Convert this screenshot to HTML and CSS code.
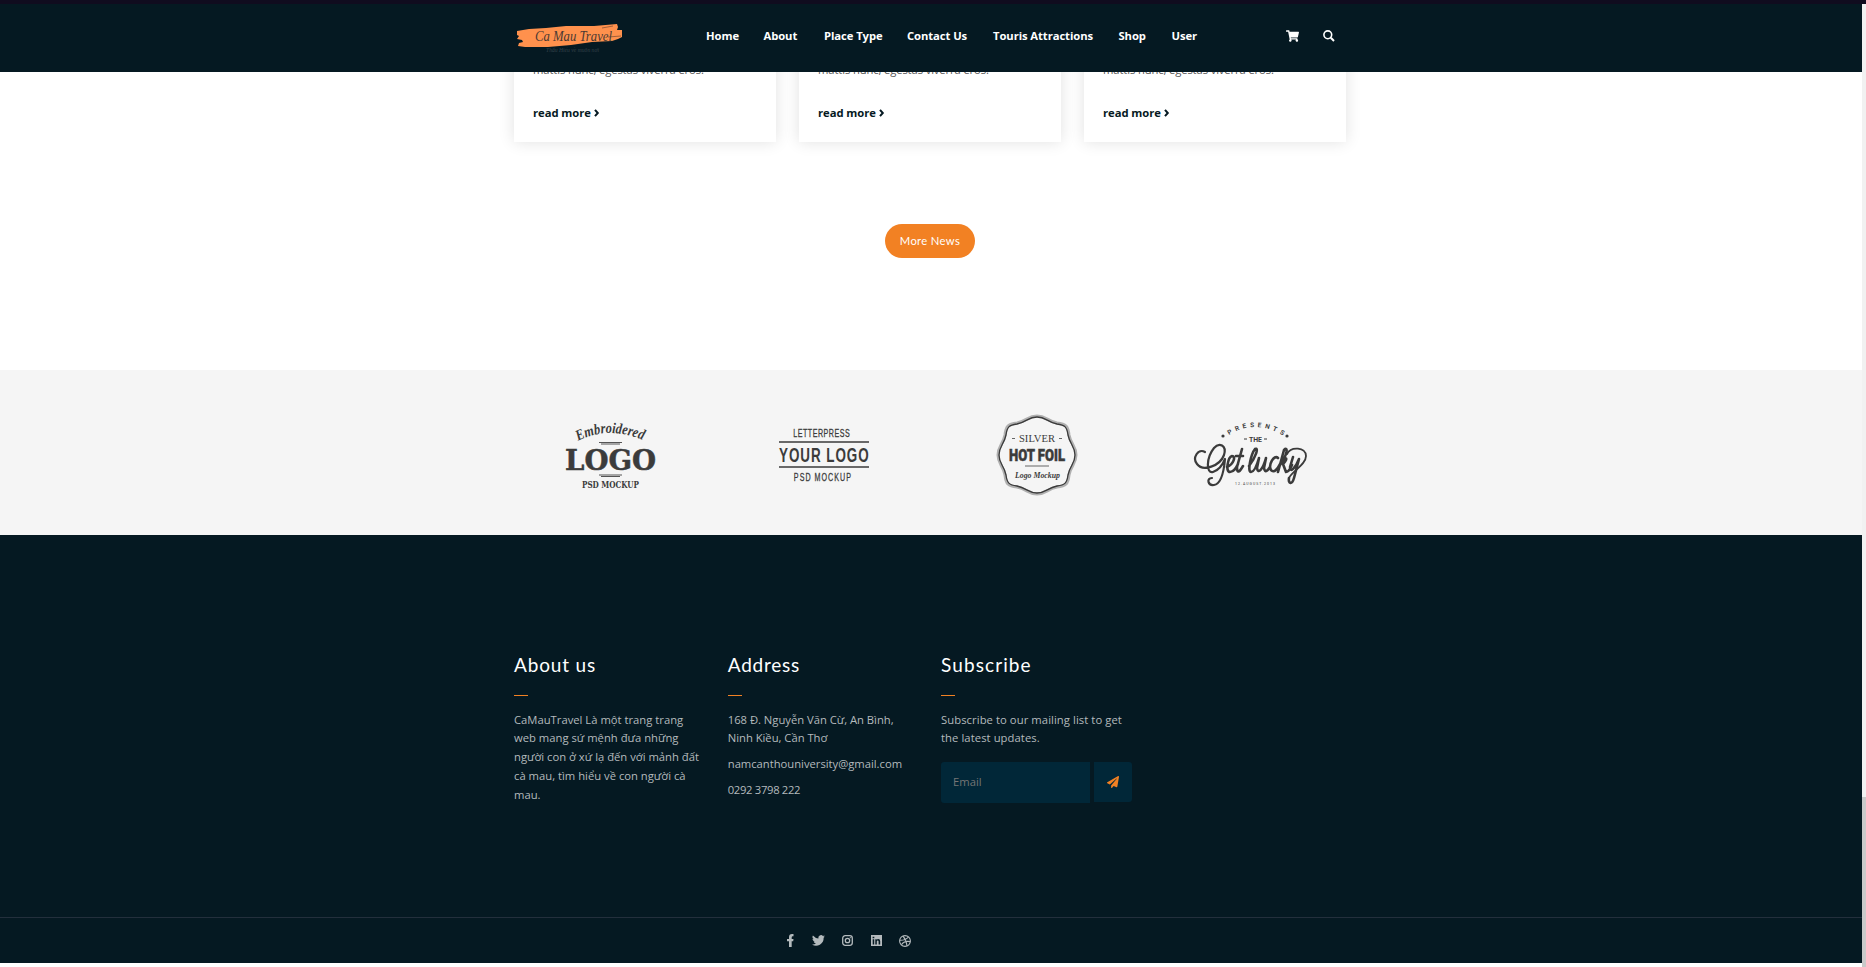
FILE: index.html
```html
<!DOCTYPE html>
<html lang="vi">
<head>
<meta charset="utf-8">
<title>Ca Mau Travel</title>
<link rel="stylesheet" href="styles.css">
</head>
<body>
<header class="header">
  <div class="header-inner">
    <svg class="brand" width="108" height="34" viewBox="0 0 108 34">
      <path d="M1 7L13 5 30 4 50 2 78 2 101 0 102 3 101 6 106 6 106 13 102 15 96 17 76 18 55 21 32 23 9 23 2 22 3 19 7 18 6 16 1 15 3 12 1 11Z" fill="#ff914d"/>
      <path d="M86 4L97 2M92 13L105 12" stroke="#7a4a30" stroke-width=".7" fill="none"/>
      <text class="script brand-name" x="19" y="17" textLength="77" lengthAdjust="spacingAndGlyphs">Ca Mau Travel</text>
      <text class="script brand-sub" x="30" y="28" textLength="53" lengthAdjust="spacingAndGlyphs">Thấu Hiểu về muôn nơi</text>
    </svg>
    <nav class="nav">
      <a class="n1">Home</a><a class="n2">About</a><a class="n3">Place Type</a><a class="n4">Contact Us</a><a class="n5">Touris Attractions</a><a class="n6">Shop</a><a class="n7">User</a>
    </nav>
    <div class="tools">
      <svg width="13" height="12" viewBox="0 0 576 512"><path fill="#fff" d="M528 301l47-208c4-15-8-29-23-29H159l-9-45C148 8 138 0 127 0H24C11 0 0 11 0 24v16c0 13 11 24 24 24h70l70 343a56 56 0 1 0 67 9h210a56 56 0 1 0 64-11l5-25c4-15-8-29-23-29H218l-7-32h294c11 0 20-8 23-18z"/></svg>
      <svg width="12" height="12" viewBox="0 0 12 12"><circle cx="4.8" cy="4.8" r="3.9" fill="none" stroke="#fff" stroke-width="1.6"/><path d="M7.8 7.8L11 11" stroke="#fff" stroke-width="2"/></svg>
    </div>
  </div>
</header>
<div class="scrollbar"><div class="thumb"></div></div>
<main class="page">
  <section class="news">
    <div class="cards">
      <article class="card"><p class="excerpt">mattis nunc, egestas viverra eros.</p><a class="more">read more <svg width="5" height="8" viewBox="0 0 5 8"><path d="M1 .8L3.8 4 1 7.2" fill="none" stroke="#051922" stroke-width="2"/></svg></a></article>
      <article class="card"><p class="excerpt">mattis nunc, egestas viverra eros.</p><a class="more">read more <svg width="5" height="8" viewBox="0 0 5 8"><path d="M1 .8L3.8 4 1 7.2" fill="none" stroke="#051922" stroke-width="2"/></svg></a></article>
      <article class="card"><p class="excerpt">mattis nunc, egestas viverra eros.</p><a class="more">read more <svg width="5" height="8" viewBox="0 0 5 8"><path d="M1 .8L3.8 4 1 7.2" fill="none" stroke="#051922" stroke-width="2"/></svg></a></article>
    </div>
    <a class="btn">More News</a>
  </section>
  <section class="logos">
    <svg width="92" height="66" viewBox="0 0 92 66" fill="#3b3b3b">
      <path id="arc1" d="M13 19Q44 3 80 19" fill="none"/>
      <text class="script emb"><textPath href="#arc1" textLength="67" lengthAdjust="spacingAndGlyphs">Embroidered</textPath></text>
      <path d="M34 20.500h23M36 22h19M34 53h23M36 54.500h19" stroke="#555" stroke-width="1"/>
      <text class="slab" x="0" y="48" textLength="91" lengthAdjust="spacingAndGlyphs">LOGO</text>
      <text class="slab-sm" x="17" y="66" textLength="57" lengthAdjust="spacingAndGlyphs">PSD MOCKUP</text>
    </svg>
    <svg width="90" height="56" viewBox="0 0 90 56" fill="#3b3b3b">
      <g transform="scale(.62 1)"><text class="cond" x="23" y="10" textLength="91">LETTERPRESS</text></g>
      <path d="M0 15h90M0 40h90" stroke="#3b3b3b" stroke-width="1.7"/>
      <g transform="scale(.64 1)"><text class="cond-b" x="0" y="35" textLength="140">YOUR LOGO</text></g>
      <g transform="scale(.62 1)"><text class="cond" x="24" y="54" textLength="92">PSD MOCKUP</text></g>
    </svg>
    <svg width="82" height="82" viewBox="-41 -41 82 82" fill="#3b3b3b">
      <path d="M0-39C9-39 10-34 20-32C29-31 31-29 32-20C34-10 39-9 39 0C39 9 34 10 32 20C31 29 29 31 20 32C10 34 9 39 0 39C-9 39-10 34-20 32C-29 31-31 29-32 20C-34 10-39 9-39 0C-39-9-34-10-32-20C-31-29-29-31-20-32C-10-34-9-39 0-39Z" fill="none" stroke="#b0b0b0" stroke-width="3"/>
      <path d="M0-38C9-38 10-33 20-31C28-30 30-28 31-20C33-10 38-9 38 0C38 9 33 10 31 20C30 28 28 30 20 31C10 33 9 38 0 38C-9 38-10 33-20 31C-28 30-30 28-31 20C-33 10-38 9-38 0C-38-9-33-10-31-20C-30-28-28-30-20-31C-10-33-9-38 0-38Z" fill="none" stroke="#3b3b3b" stroke-width="1.300"/>
      <text class="silver" x="-18" y="-13.500" textLength="36" lengthAdjust="spacingAndGlyphs">SILVER</text>
      <path d="M-25-16.500h3M22-16.500h3M-12 11h24" stroke="#666" stroke-width="1.200"/>
      <text class="hot" x="-28" y="6" textLength="56" lengthAdjust="spacingAndGlyphs">HOT FOIL</text>
      <text class="script mock" x="-22" y="23" textLength="45" lengthAdjust="spacingAndGlyphs">Logo Mockup</text>
    </svg>
    <svg class="lucky" width="114" height="68" viewBox="0 0 114 68" fill="#3b3b3b">
      <path id="arc2" d="M35 14Q60-2 88 14" fill="none"/>
      <text class="presents"><textPath href="#arc2" textLength="57">PRESENTS</textPath></text>
      <circle cx="29" cy="15" r="1.600"/><circle cx="93" cy="15" r="1.600"/>
      <text class="the" x="55" y="21" textLength="13" lengthAdjust="spacingAndGlyphs">THE</text>
      <path d="M50 18h3M70 18h3" stroke="#3b3b3b"/>
      <g fill="none" stroke="#3b3b3b" stroke-linecap="round" stroke-linejoin="round">
        <path stroke-width="2.200" d="M11 31C4 27-2 37 3 43C9 51 26 45 30 34C33 24 25 21 20 27C12 37 12 53 19 51C25 49 29 43 31 38C30 49 28 63 20 64C14 65 12 57 18 57"/>
        <path stroke-width="2.600" d="M33 46C40 43 42 35 38 35C34 36 31 51 36 51C40 51 42 47 44 43M48 28L43 46C43 54 46 50 49 45M42 35H49M55 45C62 36 65 26 61 28C57 33 53 51 57 51C60 51 63 44 65 37L63 47C64 54 69 48 72 37L70 47C71 53 74 49 76 46M84 37C80 33 74 44 77 49C80 53 84 47 86 43M86 44C94 33 94 25 90 29L84 51M86 44C92 34 95 37 89 43L92 51C95 51 96 48 98 44M99 36L96 46C96 53 102 46 105 38L100 57C98 64 94 63 95 57"/>
        <path stroke-width="1.800" d="M95 57C98 50 112 44 112 35C112 26 97 25 93 33"/>
      </g>
      <text class="date" x="41" y="64" textLength="40">12.AUGUST.2013</text>
    </svg>
  </section>
  <footer class="footer">
    <div class="cols">
      <div class="col about"><h2 class="h1w">About us</h2><p>CaMauTravel Là một trang trang<br>web mang sứ mệnh đưa những<br>người con ở xứ lạ đến với mảnh đất<br>cà mau, tìm hiểu về con người cà<br>mau.</p></div>
      <div class="col"><h2 class="h2w">Address</h2><p class="addr">168 Đ. Nguyễn Văn Cừ, An Bình,<br>Ninh Kiều, Cần Thơ</p><p class="addr mail">namcanthouniversity@gmail.com</p><p class="addr phone">0292 3798 222</p></div>
      <div class="col"><h2 class="h3w">Subscribe</h2><p class="sub">Subscribe to our mailing list to get<br>the latest updates.</p>
        <div class="form"><div class="email">Email</div><div class="send"><svg width="12" height="12" viewBox="0 0 512 512"><path fill="#f28123" d="M476 3L12 271c-18 10-16 36 2 43l107 45L409 105c5-5 13 2 8 8L176 407v80c0 24 28 33 42 16l64-78 125 53c14 6 31-3 33-19L512 28c3-20-19-34-36-25z"/></svg></div></div>
      </div>
    </div>
    <div class="social">
      <svg width="7" height="13" viewBox="0 0 7 13"><path d="M2 13V7.200H0V5H2V3.300Q2 0 5 0H6.500V2.200H5.700Q4.700 2.200 4.700 3.400V5H6.500L6.200 7.200H4.700V13Z"/></svg>
      <svg width="13" height="11" viewBox="0 0 24 20"><path d="M24 2.400a10 10 0 0 1-2.800.8A5 5 0 0 0 23.300.5a10 10 0 0 1-3.100 1.200A4.900 4.900 0 0 0 11.800 6.200 14 14 0 0 1 1.700 1a4.900 4.900 0 0 0 1.500 6.600A5 5 0 0 1 1 7c0 2.300 1.600 4.400 3.900 4.900a5 5 0 0 1-2.200.1 4.900 4.900 0 0 0 4.600 3.400A9.900 9.900 0 0 1 0 17.400 14 14 0 0 0 21.500 5Z"/></svg>
      <svg width="11" height="11" viewBox="0 0 11 11"><rect x=".7" y=".7" width="9.600" height="9.600" rx="2.500" fill="none" stroke="#b4babd" stroke-width="1.300"/><circle cx="5.500" cy="5.500" r="2.200" fill="none" stroke="#b4babd" stroke-width="1.300"/><circle cx="8.300" cy="2.700" r=".6"/></svg>
      <svg width="11" height="11" viewBox="0 0 11 11"><path fill-rule="evenodd" d="M0 0H11V11H0ZM1.700 4.200V9.400H3.200V4.200ZM1.600 1.700V3.300H3.300V1.700ZM4.300 4.200V9.400H5.800V6.500Q5.900 5.400 6.700 5.400 7.600 5.400 7.600 6.600V9.400H9.200V6.200Q9.200 4.100 7.200 4.100 6.200 4.100 5.800 4.900V4.200Z"/></svg>
      <svg width="12" height="12" viewBox="0 0 12 12"><g fill="none" stroke="#b4babd" stroke-width="1.100"><circle cx="6" cy="6" r="5.400"/><path d="M4 1.200Q7.300 5 8 10.900M.8 5.300Q6.500 5.500 9.500 2M2.500 9.800Q5 5.500 11.200 6.600"/></g></svg>
    </div>
  </footer>
</main>
</body>
</html>
```
FILE: styles.css
```css
* { box-sizing: border-box; }
body { margin: 0; height: 967px; overflow: hidden; background: #fff; font-family: "Open Sans", sans-serif; font-size: 11.25px; line-height: 18.75px; color: #051922; }
h2, p { margin: 0; font-weight: 400; }
svg { display: block; flex: none; overflow: visible; }
a, h2, p { white-space: nowrap; }
.header { position: fixed; left: 0; top: 0; width: 1866px; height: 72px; border-top: 4px solid #100c1f; background: linear-gradient(#051922, #051922) no-repeat 0 0 / 1862px 68px; z-index: 2; }
.header-inner { display: flex; margin-left: 514px; width: 832px; height: 68px; }
.brand { margin: 20px 0 0 2px; }
.script { font-family: "Liberation Serif", serif; font-style: italic; }
.brand-name { font-size: 15px; fill: #4b3933; }
.brand-sub { font-size: 7px; fill: #34424a; }
.nav { display: flex; margin: 22px 0 0 82px; width: 515px; color: #fff; font-weight: 700; line-height: 20px; letter-spacing: -.08px; }
.n1 { width: 57.5px; }
.n2 { width: 60.5px; }
.n3 { width: 83px; }
.n4 { width: 86px; }
.n5 { width: 125.5px; }
.n6 { width: 53px; }
.tools { display: flex; gap: 24px; margin: 26px 0 0 65px; }
.scrollbar { position: fixed; right: 0; top: 4px; width: 4px; height: 963px; background: #f1f1f1; padding-top: 793px; z-index: 3; }
.thumb { height: 170px; background: #c9c9c9; }
.page { width: 1862px; }
.news { height: 370px; display: flex; flex-direction: column; align-items: center; padding-right: 2px; }
.cards { display: flex; gap: 23px; width: 832px; height: 142px; }
.card { flex: 1; padding: 61px 19px 0; box-shadow: 0 0 15px rgba(0,0,0,.12); }
.excerpt { color: #555; letter-spacing: -.13px; }
.more { display: flex; align-items: center; gap: 3px; margin-top: 24px; font-weight: 700; letter-spacing: -.05px; }
.btn { margin-top: 82px; width: 90px; height: 34px; border-radius: 17px; background: #f28123; color: #fff; text-align: center; line-height: 33px; font-family: Lato, sans-serif; font-size: 11.25px; letter-spacing: .35px; }
.logos { height: 165px; background: #f5f5f5; display: grid; grid-template-columns: repeat(4, 213px); justify-content: start; justify-items: center; align-items: center; padding-left: 504px; padding-top: 4px; }
.lucky { transform: translateX(1px); }
.emb { font-size: 15px; font-weight: 700; }
.slab { font: 700 27px "DejaVu Serif", serif; stroke: #3b3b3b; stroke-width: .5; }
.slab-sm { font: 700 8.5px "DejaVu Serif", serif; }
.cond { font: 11.5px "Liberation Sans", sans-serif; stroke: #3b3b3b; stroke-width: .3; }
.cond-b { font: 700 21px "Liberation Sans", sans-serif; }
.silver { font: 11px "Liberation Serif", serif; }
.hot { font: 900 17px Roboto, sans-serif; stroke: #3b3b3b; stroke-width: .5; }
.mock { font-size: 9px; font-weight: 700; }
.presents { font: 700 6.5px Roboto, sans-serif; }
.the { font: 700 8px Roboto, sans-serif; }
.date { font: 3.5px Roboto, sans-serif; }
.footer { height: 428px; background: #051922; color: #b4babd; }
.cols { display: grid; grid-template-columns: 213.75px 213.25px 192px; padding: 114px 0 0 514px; height: 382px; align-items: start; }
.col h2 { height: 47px; margin-bottom: 14.5px; border-bottom: 1px solid; border-image: linear-gradient(90deg, #f28123 15px, transparent 15px) 1; color: #fff; font-family: Lato, sans-serif; font-size: 19px; line-height: 31px; }
.col .h1w { letter-spacing: .85px; }
.col .h2w { letter-spacing: .75px; }
.col .h3w { letter-spacing: 1.1px; }
.about p { letter-spacing: 0; }
.sub { letter-spacing: .07px; }
.addr { letter-spacing: -.02px; }
.mail, .phone { margin-top: 7.25px; }
.phone { letter-spacing: -.32px; }
.form { display: flex; gap: 4px; margin-top: 13.5px; width: 191px; align-items: flex-start; }
.email { width: 149px; height: 41px; padding-left: 12px; line-height: 40px; background: #012738; border-radius: 3px 0 0 3px; color: #757575; }
.send { width: 38px; height: 40px; display: grid; place-items: center; background: #012738; border-radius: 0 3px 3px 0; }
.social { display: flex; align-items: center; height: 46px; border-top: 1px solid #232f3c; padding-left: 787px; fill: #b4babd; gap: 17.5px; }
```
